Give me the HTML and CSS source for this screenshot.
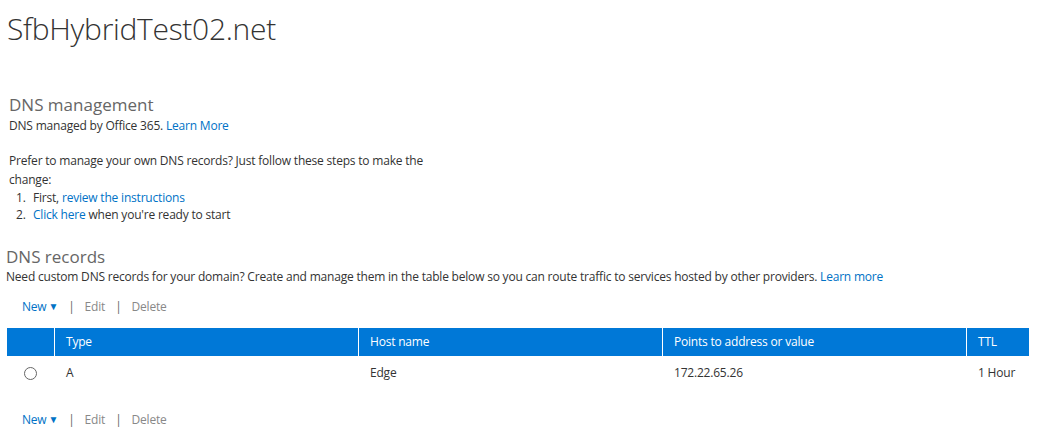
FILE: index.html
```html
<!DOCTYPE html>
<html>
<head>
<meta charset="utf-8">
<link rel="stylesheet" href="styles.css">
</head>
<body>
<div class="page">
  <h1 class="title">SfbHybridTest02.net</h1>

  <section class="mgmt">
    <h2 class="section-title">DNS management</h2>
    <p class="line">DNS managed by Office 365. <a class="link">Learn More</a></p>
    <p class="prefer">Prefer to manage your own DNS records? Just follow these steps to make the change:</p>
    <ol class="steps">
      <li><span class="num">1.</span>First, <a class="link">review the instructions</a></li>
      <li><span class="num">2.</span><a class="link">Click here</a> when you're ready to start</li>
    </ol>
  </section>

  <section class="records">
    <h2 class="section-title rec">DNS records</h2>
    <p class="line">Need custom DNS records for your domain? Create and manage them in the table below so you can route traffic to services hosted by other providers. <a class="link">Learn more</a></p>

    <div class="toolbar">
      <a class="link">New<span class="caret">&#9660;</span></a>
      <span class="sep">|</span>
      <span class="dis">Edit</span>
      <span class="sep">|</span>
      <span class="dis">Delete</span>
    </div>

    <div class="table">
      <div class="thead">
        <div class="c c0"></div>
        <div class="c c1">Type</div>
        <div class="c c2">Host name</div>
        <div class="c c3">Points to address or value</div>
        <div class="c c4">TTL</div>
      </div>
      <div class="row">
        <div class="c c0"><span class="radio"></span></div>
        <div class="c c1">A</div>
        <div class="c c2">Edge</div>
        <div class="c c3">172.22.65.26</div>
        <div class="c c4">1 Hour</div>
      </div>
    </div>

    <div class="toolbar bottom">
      <a class="link">New<span class="caret">&#9660;</span></a>
      <span class="sep">|</span>
      <span class="dis">Edit</span>
      <span class="sep">|</span>
      <span class="dis">Delete</span>
    </div>
  </section>
</div>
</body>
</html>
```
FILE: styles.css
```css
* { box-sizing: border-box; }
html, body { margin: 0; padding: 0; background: #fff; }
body {
  font-family: "Open Sans", "Noto Sans", "Liberation Sans", sans-serif;
  font-size: 12px;
  letter-spacing: -0.2px;
  color: #333;
}
.page { padding: 0 13px 0 6px; }
.title {
  margin: 0;
  padding: 10px 0 0 1px;
  font-size: 30px;
  font-weight: 300;
  line-height: 38px;
  color: #333;
  letter-spacing: -0.3px;
}
.mgmt { padding: 45px 0 0 3px; }
.section-title {
  margin: 0;
  font-size: 17px;
  font-weight: 400;
  color: #666;
  line-height: 24px;
  letter-spacing: 0;
}
.section-title.rec { line-height: 22px; }
.line { margin: 0; line-height: 18px; }
.link { color: #0072c6; text-decoration: none; }
.prefer { margin: 16px 0 0 0; width: 440px; line-height: 19px; }
.steps { margin: 0; padding: 0; list-style: none; line-height: 17px; }
.num { display: inline-block; width: 24px; padding-left: 7px; }
.records { padding-top: 23px; }
.toolbar {
  display: flex;
  gap: 10px;
  align-items: center;
  padding: 12px 0 0 16px;
  line-height: 18px;
}
.caret { font-size: 10px; position: relative; top: -1px; margin-left: 2px; }
.sep { color: #666; }
.dis { color: #888; }
.table { margin: 12px 0 0 1px; }
.thead, .row { display: grid; grid-template-columns: 47px 304px 304px 304px 1fr; }
.thead { background: #0078d7; color: #fff; height: 28px; }
.thead .c { border-left: 1px solid #fff; line-height: 28px; padding-left: 11px; }
.thead .c0 { border-left: 0; }
.row { height: 34px; }
.row .c { line-height: 34px; padding-left: 12px; }
.row .c0 { display: flex; align-items: center; padding-left: 17px; }
.radio {
  width: 13px; height: 13px;
  border: 1px solid #666;
  border-radius: 50%;
  display: inline-block;
}
.toolbar.bottom { padding-top: 21px; }
```
